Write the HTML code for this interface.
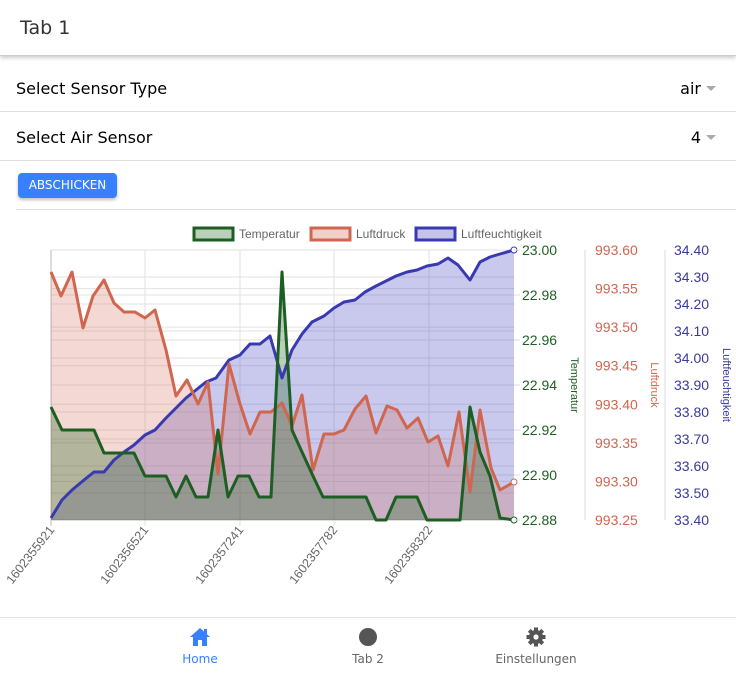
<!DOCTYPE html>
<html><head><meta charset="utf-8"><style>
*{box-sizing:border-box;margin:0;padding:0}
body{width:736px;height:674px;overflow:hidden;background:#fff;font-family:"DejaVu Sans","Liberation Sans",sans-serif;position:relative;color:#000}
.hdr{position:absolute;left:0;top:0;width:736px;height:56px;box-shadow:0 2px 4px rgba(0,0,0,.2);border-bottom:1px solid #ccc;background:#fff;z-index:2}
.hdr span{position:absolute;left:20px;top:17px;font-size:19px;color:#333}
.row{position:absolute;left:0;width:736px;height:49px;border-bottom:1px solid #ddd}
.row .l{position:absolute;left:16px;top:16px;font-size:16px}
.row .r{position:absolute;right:35px;top:16px;font-size:16px}
.row .a{position:absolute;right:20px;top:23px;width:0;height:0;border-left:5px solid transparent;border-right:5px solid transparent;border-top:5px solid #aaa}
.btn{position:absolute;left:18px;top:173px;width:99px;height:25px;background:#3880ff;border-radius:4px;color:#fff;font-size:12px;text-align:center;line-height:25px;box-shadow:0 2px 3px rgba(0,0,0,.25)}
.sep{position:absolute;left:16px;right:0;top:209px;border-top:1px solid #ddd}
.tabs{position:absolute;left:0;top:617px;width:736px;height:57px;border-top:1px solid #e4e4e4}
.t{position:absolute;top:34px;font-size:12px;color:#666;transform:translateX(-50%);white-space:nowrap}
</style></head><body>
<div class="hdr"><span>Tab 1</span></div>
<div class="row" style="top:63px"><span class="l">Select Sensor Type</span><span class="r">air</span><span class="a"></span></div>
<div class="row" style="top:112px"><span class="l">Select Air Sensor</span><span class="r">4</span><span class="a"></span></div>
<div class="btn">ABSCHICKEN</div>
<div class="sep"></div>
<svg style="position:absolute;left:0;top:0" width="736" height="674" font-family="Liberation Sans, sans-serif">
<g stroke="#e2e2e2" stroke-width="1">
<line x1="51" y1="250" x2="514" y2="250"/><line x1="51" y1="295" x2="514" y2="295"/><line x1="51" y1="340" x2="514" y2="340"/><line x1="51" y1="385" x2="514" y2="385"/><line x1="51" y1="430" x2="514" y2="430"/><line x1="51" y1="475" x2="514" y2="475"/>
<line x1="51" y1="288.6" x2="514" y2="288.6"/><line x1="51" y1="327.1" x2="514" y2="327.1"/><line x1="51" y1="365.7" x2="514" y2="365.7"/><line x1="51" y1="404.3" x2="514" y2="404.3"/><line x1="51" y1="442.9" x2="514" y2="442.9"/><line x1="51" y1="481.4" x2="514" y2="481.4"/>
<line x1="51" y1="277" x2="514" y2="277"/><line x1="51" y1="304" x2="514" y2="304"/><line x1="51" y1="331" x2="514" y2="331"/><line x1="51" y1="358" x2="514" y2="358"/><line x1="51" y1="412" x2="514" y2="412"/><line x1="51" y1="439" x2="514" y2="439"/><line x1="51" y1="466" x2="514" y2="466"/><line x1="51" y1="493" x2="514" y2="493"/>
<line x1="145" y1="250" x2="145" y2="526"/><line x1="240" y1="250" x2="240" y2="526"/><line x1="334" y1="250" x2="334" y2="526"/><line x1="429" y1="250" x2="429" y2="526"/>
</g>
<line x1="51" y1="250" x2="51" y2="526" stroke="#bbb"/>
<line x1="51" y1="520" x2="514" y2="520" stroke="#bbb"/>
<polygon fill="rgba(60,60,190,0.28)" points="51,518 62,500 72,490 84,480 94,472 104,472 114,460 124,452 134,445 145,435 155,430 166,418 176,408 186,398 196,390 206,382 216,378 229,360 240,355 250,344 260,344 270,336 282,378 292,350 302,334 312,322 324,316 334,308 344,302 355,300 365,292 376,286 386,281 396,276 407,272 417,270 427,266 438,264 448,258 458,265 470,280 480,262 490,257 500,254 514,250 514,520 51,520"/>
<polygon fill="rgba(210,100,80,0.25)" points="51,272 61,296 72,272 83,328 93,296 104,280 114,303 124,312 135,312 145,318 155,310 166,350 176,396 187,380 198,404 208,382 218,474 229,364 240,404 250,434 260,412 271,412 282,403 292,426 302,395 313,470 324,434 334,434 344,430 355,409 366,396 376,433 387,406 397,410 407,428 418,418 428,442 438,436 448,466 459,412 470,492 480,410 491,468 500,490 514,482 514,520 51,520"/>
<polygon fill="rgba(30,100,30,0.3)" points="51,407 62,430 72,430 83,430 94,430 104,453 114,453 124,453 134,453 145,476 155,476 166,476 176,497 186,476 196,497 208,497 218,430 228,497 238,476 249,476 259,497 271,497 282,272 292,430 302,452 313,476 323,497 333,497 343,497 354,497 366,497 376,520 386,520 396,497 406,497 417,497 427,520 438,520 448,520 460,520 470,407 480,452 490,476 500,518 514,520 51,520"/>
<polyline fill="none" stroke="#3a3ab0" stroke-width="3" stroke-linejoin="round" points="51,518 62,500 72,490 84,480 94,472 104,472 114,460 124,452 134,445 145,435 155,430 166,418 176,408 186,398 196,390 206,382 216,378 229,360 240,355 250,344 260,344 270,336 282,378 292,350 302,334 312,322 324,316 334,308 344,302 355,300 365,292 376,286 386,281 396,276 407,272 417,270 427,266 438,264 448,258 458,265 470,280 480,262 490,257 500,254 514,250"/>
<polyline fill="none" stroke="#cf6650" stroke-width="3" stroke-linejoin="round" points="51,272 61,296 72,272 83,328 93,296 104,280 114,303 124,312 135,312 145,318 155,310 166,350 176,396 187,380 198,404 208,382 218,474 229,364 240,404 250,434 260,412 271,412 282,403 292,426 302,395 313,470 324,434 334,434 344,430 355,409 366,396 376,433 387,406 397,410 407,428 418,418 428,442 438,436 448,466 459,412 470,492 480,410 491,468 500,490 514,482"/>
<polyline fill="none" stroke="#1d5f22" stroke-width="3" stroke-linejoin="round" points="51,407 62,430 72,430 83,430 94,430 104,453 114,453 124,453 134,453 145,476 155,476 166,476 176,497 186,476 196,497 208,497 218,430 228,497 238,476 249,476 259,497 271,497 282,272 292,430 302,452 313,476 323,497 333,497 343,497 354,497 366,497 376,520 386,520 396,497 406,497 417,497 427,520 438,520 448,520 460,520 470,407 480,452 490,476 500,518 514,520"/>
<circle cx="514" cy="250" r="3" fill="#fff" stroke="#3a3ab0"/><circle cx="514" cy="482" r="3" fill="#fff" stroke="#cf6650"/><circle cx="514" cy="520" r="3" fill="#fff" stroke="#1d5f22"/>
<rect x="194" y="228" width="39" height="12" fill="rgba(30,100,30,0.3)" stroke="#1d5f22" stroke-width="3"/>
<text x="239" y="238" font-size="12" fill="#666">Temperatur</text>
<rect x="311" y="228" width="39" height="12" fill="rgba(210,100,80,0.3)" stroke="#cf6650" stroke-width="3"/>
<text x="356" y="238" font-size="12" fill="#666">Luftdruck</text>
<rect x="416" y="228" width="39" height="12" fill="rgba(60,60,190,0.3)" stroke="#3a3ab0" stroke-width="3"/>
<text x="461" y="238" font-size="12" fill="#666">Luftfeuchtigkeit</text>
<g font-size="14" fill="#1d5f22">
<text x="522" y="255">23.00</text><text x="522" y="300">22.98</text><text x="522" y="345">22.96</text><text x="522" y="390">22.94</text><text x="522" y="435">22.92</text><text x="522" y="480">22.90</text><text x="522" y="525">22.88</text>
</g>
<g stroke="#ddd"><line x1="514" y1="250" x2="520" y2="250"/><line x1="514" y1="295" x2="520" y2="295"/><line x1="514" y1="340" x2="520" y2="340"/><line x1="514" y1="385" x2="520" y2="385"/><line x1="514" y1="430" x2="520" y2="430"/><line x1="514" y1="475" x2="520" y2="475"/><line x1="514" y1="520" x2="520" y2="520"/>
<line x1="585" y1="250" x2="585" y2="520"/><line x1="665" y1="250" x2="665" y2="520"/></g>
<g font-size="14" fill="#cf6650">
<text x="595" y="255">993.60</text><text x="595" y="293.6">993.55</text><text x="595" y="332">993.50</text><text x="595" y="370.7">993.45</text><text x="595" y="409.3">993.40</text><text x="595" y="447.9">993.35</text><text x="595" y="486.4">993.30</text><text x="595" y="525">993.25</text>
</g>
<g font-size="14" fill="#3a3a9a">
<text x="674" y="255">34.40</text><text x="674" y="282">34.30</text><text x="674" y="309">34.20</text><text x="674" y="336">34.10</text><text x="674" y="363">34.00</text><text x="674" y="390">33.90</text><text x="674" y="417">33.80</text><text x="674" y="444">33.70</text><text x="674" y="471">33.60</text><text x="674" y="498">33.50</text><text x="674" y="525">33.40</text>
</g>
<text transform="translate(571,385) rotate(90)" font-size="11" fill="#1d5f22" text-anchor="middle">Temperatur</text>
<text transform="translate(651,385) rotate(90)" font-size="11" fill="#cf6650" text-anchor="middle">Luftdruck</text>
<text transform="translate(723,385) rotate(90)" font-size="11" fill="#3a3a9a" text-anchor="middle">Luftfeuchtigkeit</text>
<g font-size="12.5" fill="#666" text-anchor="end">
<text transform="translate(55,530) rotate(-52)">1602355921</text>
<text transform="translate(149,530) rotate(-52)">1602356521</text>
<text transform="translate(244,530) rotate(-52)">1602357241</text>
<text transform="translate(338,530) rotate(-52)">1602357782</text>
<text transform="translate(433,530) rotate(-52)">1602358322</text>
</g>
</svg>
<div class="tabs">
<svg style="position:absolute;left:189px;top:9px" width="22" height="20" viewBox="0 0 22 20"><path d="M11 1 L1 10 L4 10 L4 19 L9 19 L9 13 L13 13 L13 19 L18 19 L18 10 L21 10 Z" fill="#3880ff"/><rect x="15" y="2" width="3" height="5" fill="#3880ff"/></svg>
<div class="t" style="left:200px;color:#3880ff">Home</div>
<div style="position:absolute;left:359px;top:10px;width:18px;height:18px;border-radius:50%;background:#555"></div>
<div class="t" style="left:368px">Tab 2</div>
<svg style="position:absolute;left:526px;top:9px" width="20" height="20" viewBox="0 0 20 20"><g fill="#555"><circle cx="10" cy="10" r="7"/><rect x="8" y="0.5" width="4" height="19"/><rect x="0.5" y="8" width="19" height="4"/><rect x="8" y="0.5" width="4" height="19" transform="rotate(45 10 10)"/><rect x="8" y="0.5" width="4" height="19" transform="rotate(-45 10 10)"/></g><circle cx="10" cy="10" r="2.6" fill="#fff"/></svg>
<div class="t" style="left:536px">Einstellungen</div>
</div>
</body></html>
